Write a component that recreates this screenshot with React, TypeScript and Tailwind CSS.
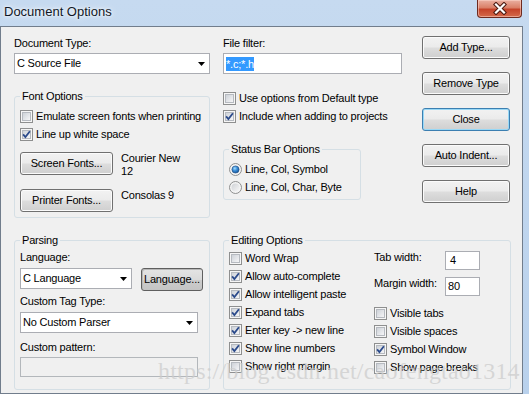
import type { ReactNode } from "react";

function CheckBox({ checked = false, label }: { checked?: boolean; label: string }) {
  return (
    <div className="flex h-[18px] items-center gap-[3px]">
      <svg width="13" height="13" viewBox="0 0 13 13" className="shrink-0">
        <defs>
          <linearGradient id="cbFill" x1="0" y1="0" x2="1" y2="1">
            <stop offset="0" stopColor="#cbd0d6" />
            <stop offset="1" stopColor="#f8f8f9" />
          </linearGradient>
        </defs>
        <rect x="0.5" y="0.5" width="12" height="12" fill="#f6f6f6" stroke="#8e8f8f" />
        <rect x="2.5" y="2.5" width="8" height="8" fill="url(#cbFill)" stroke="#b6bac0" />
        {checked && (
          <path d="M3.1 6.3 5.4 9 9.9 3.2" fill="none" stroke="#2b4a8b" strokeWidth="1.8" />
        )}
      </svg>
      <span className="whitespace-nowrap">{label}</span>
    </div>
  );
}

function Radio({ checked = false, label }: { checked?: boolean; label: string }) {
  return (
    <div className="flex h-[18px] items-center gap-[3px]">
      <svg width="13" height="13" viewBox="0 0 13 13" className="shrink-0">
        <defs>
          <linearGradient id="rdFill" x1="0" y1="0" x2="1" y2="1">
            <stop offset="0" stopColor="#cfd2d6" />
            <stop offset="1" stopColor="#f7f7f7" />
          </linearGradient>
          <radialGradient id="rdDot" cx="0.4" cy="0.35" r="0.7">
            <stop offset="0" stopColor="#a6e0ff" />
            <stop offset="0.45" stopColor="#3d8fd8" />
            <stop offset="1" stopColor="#114f93" />
          </radialGradient>
        </defs>
        <circle cx="6.5" cy="6.5" r="6" fill="#f4f4f4" stroke="#8e8f8f" />
        {checked ? (
          <circle cx="6.5" cy="6.5" r="3.6" fill="url(#rdDot)" stroke="#1d4a80" strokeWidth="0.6" />
        ) : (
          <circle cx="6.5" cy="6.5" r="4" fill="url(#rdFill)" />
        )}
      </svg>
      <span className="whitespace-nowrap">{label}</span>
    </div>
  );
}

function Button({
  children,
  className = "",
  focused = false,
}: {
  children: ReactNode;
  className?: string;
  focused?: boolean;
}) {
  return (
    <div
      className={`flex h-[23px] shrink-0 items-center justify-center rounded-[3px] border bg-[linear-gradient(#f2f2f2_0%,#ebebeb_48%,#dddddd_52%,#cfcfcf_100%)] ${
        focused
          ? "border-[#3c7fb1] shadow-[inset_0_0_0_1px_#98d8f6]"
          : "border-[#707070] shadow-[inset_0_0_0_1px_#fbfbfb]"
      } ${className}`}
    >
      {children}
    </div>
  );
}

function Combo({ value, className = "" }: { value: string; className?: string }) {
  return (
    <div
      className={`flex h-[21px] items-center justify-between border border-[#abadb3] bg-white pl-[2px] pr-[4px] ${className}`}
    >
      <span className="whitespace-nowrap">{value}</span>
      <svg width="7" height="4" viewBox="0 0 7 4">
        <path d="M0 0h7L3.5 4z" fill="#000" />
      </svg>
    </div>
  );
}

function Group({
  title,
  children,
  className = "",
}: {
  title: string;
  children: ReactNode;
  className?: string;
}) {
  return (
    <fieldset className={`min-w-0 rounded-[3px] border border-[#d5dfe5] px-[5px] ${className}`}>
      <legend className="px-[2px] leading-[14px]">{title}</legend>
      {children}
    </fieldset>
  );
}

export default function App() {
  return (
    <div className="relative h-[394px] w-[529px] overflow-hidden bg-[linear-gradient(180deg,#c6daf0,#b9d1ec)] font-['Liberation_Sans',Arial,sans-serif] text-[11px] tracking-[-0.2px] text-black">
      {/* title bar */}
      <div className="flex h-[26px] items-start justify-between">
        <span className="pl-[4px] pt-[4px] text-[13px] leading-[16px] tracking-normal text-[#111827] [text-shadow:0_0_7px_#ffffff,0_0_3px_#ffffff]">
          Document Options
        </span>
        <div className="mr-[7px] flex h-[18px] w-[45px] items-center justify-center rounded-b-[4px] border border-t-0 border-[#6e2a1f] bg-[linear-gradient(#eab0a2_0%,#da7f68_45%,#c5432a_55%,#d46a4c_100%)] shadow-[inset_0_0_0_1px_rgba(255,220,210,0.5)]">
          <svg width="16" height="13" viewBox="0 0 16 13">
            <path d="M4 2.5 12 10.5M12 2.5 4 10.5" stroke="#4a1810" strokeWidth="4.2" strokeLinecap="square" />
            <path d="M4 2.5 12 10.5M12 2.5 4 10.5" stroke="#ffffff" strokeWidth="2.2" strokeLinecap="square" />
          </svg>
        </div>
      </div>

      {/* client area */}
      <div className="h-[368px] w-[523px] border border-[#717d8c] bg-[#f0f0f0] pl-[13px] pt-[9px]">
        {/* top section */}
        <div className="flex">
          {/* left column */}
          <div className="flex w-[196px] flex-col">
            <div className="mb-[3px] leading-[14px]">Document Type:</div>
            <Combo value="C Source File" />
            <Group title="Font Options" className="mt-[15px] pb-[5px]">
              <div className="pt-[4px]">
                <CheckBox label="Emulate screen fonts when printing" />
                <CheckBox checked label="Line up white space" />
              </div>
              <div className="mt-[9px] flex items-start gap-[8px]">
                <Button className="w-[93px]">Screen Fonts...</Button>
                <div className="leading-[13px]">
                  Courier New
                  <br />
                  12
                </div>
              </div>
              <div className="mt-[11px] flex items-start gap-[8px]">
                <Button className="w-[93px]">Printer Fonts...</Button>
                <div className="leading-[13px]">Consolas 9</div>
              </div>
            </Group>
          </div>

          {/* middle column */}
          <div className="ml-[13px] flex w-[179px] flex-col">
            <div className="mb-[3px] leading-[14px]">File filter:</div>
            <div className="flex h-[21px] items-center border border-[#abadb3] bg-white pl-[2px]">
              <span className="bg-[#3399ff] leading-[14px] text-white">*.c;*.h</span>
            </div>
            <div className="mt-[15px]">
              <CheckBox label="Use options from Default type" />
              <CheckBox checked label="Include when adding to projects" />
            </div>
            <Group title="Status Bar Options" className="mt-[17px] w-[138px] pb-[3px]">
              <div className="pt-[4px]">
                <Radio checked label="Line, Col, Symbol" />
                <Radio label="Line, Col, Char, Byte" />
              </div>
            </Group>
          </div>

          {/* buttons */}
          <div className="ml-[20px] flex w-[88px] flex-col gap-[13px]">
            <Button>Add Type...</Button>
            <Button>Remove Type</Button>
            <Button focused>Close</Button>
            <Button>Auto Indent...</Button>
            <Button>Help</Button>
          </div>
        </div>

        {/* bottom section */}
        <div className="mt-[15px] flex">
          <Group title="Parsing" className="w-[196px] pb-[11px]">
            <div className="pt-[3px] leading-[14px]">Language:</div>
            <div className="mt-[4px] flex items-start gap-[9px]">
              <Combo value="C Language" className="w-[112px]" />
              <div className="flex h-[23px] w-[62px] items-end justify-center rounded-[3px] border border-[#5f5f5f] bg-[linear-gradient(#e4e4e4_0%,#dadada_50%,#cccccc_52%,#c4c4c4_100%)] pb-[3px] shadow-[inset_1px_1px_0_#b8b8b8]">
                Language...
              </div>
            </div>
            <div className="mt-[3px] leading-[14px]">Custom Tag Type:</div>
            <Combo value="No Custom Parser" className="mt-[4px] w-[178px]" />
            <div className="mt-[7px] leading-[14px]">Custom pattern:</div>
            <div className="mt-[3px] h-[20px] w-[178px] border border-[#b3b7bb] bg-[#f0f0f0]" />
          </Group>

          <Group title="Editing Options" className="ml-[13px] w-[288px] pb-[13px]">
            <div className="flex pt-[2px]">
              <div className="w-[145px]">
                <CheckBox label="Word Wrap" />
                <CheckBox checked label="Allow auto-complete" />
                <CheckBox checked label="Allow intelligent paste" />
                <CheckBox checked label="Expand tabs" />
                <CheckBox checked label="Enter key -> new line" />
                <CheckBox checked label="Show line numbers" />
                <CheckBox label="Show right margin" />
              </div>
              <div className="flex-1">
                <div className="h-[54px]">
                  <div className="mt-[1px] flex items-start">
                    <div className="w-[71px] leading-[14px]">Tab width:</div>
                    <div className="mt-[1px] flex h-[19px] w-[35px] items-center border border-[#abadb3] bg-white pl-[4px]">
                      4
                    </div>
                  </div>
                  <div className="mt-[6px] flex items-start">
                    <div className="w-[71px] leading-[14px]">Margin width:</div>
                    <div className="mt-[1px] flex h-[19px] w-[35px] items-center border border-[#abadb3] bg-white pl-[2px]">
                      80
                    </div>
                  </div>
                </div>
                <CheckBox label="Visible tabs" />
                <CheckBox label="Visible spaces" />
                <CheckBox checked label="Symbol Window" />
                <CheckBox label="Show page breaks" />
              </div>
            </div>
          </Group>
        </div>
      </div>

      {/* watermark */}
      <div className="pointer-events-none absolute left-[158px] top-[357px] whitespace-nowrap font-['Liberation_Serif',serif] text-[24px] leading-[28px] tracking-[0.2px] text-[#cdcdcd]/75">
        https://blog.csdn.net/caofengtao1314
      </div>
    </div>
  );
}
